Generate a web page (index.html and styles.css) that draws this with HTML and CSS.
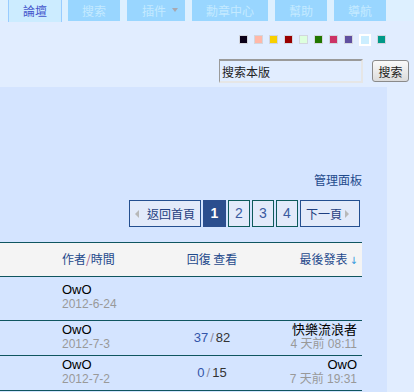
FILE: index.html
```html
<!DOCTYPE html>
<html lang="zh-Hant">
<head>
<meta charset="UTF-8">
<title>論壇</title>
<link rel="stylesheet" href="styles.css">
</head>

<body>

<div class="nav">
  <a class="tab current" href="#">論壇</a>
  <a class="tab" href="#">搜索</a>
  <a class="tab menu" href="#">插件<span class="caret"></span></a>
  <a class="tab wide" href="#">勳章中心</a>
  <a class="tab" href="#">幫助</a>
  <a class="tab" href="#">導航</a>
</div>

<div class="wrap">
  <ul class="styles">
    <li style="background-color: #0a0018"></li>
    <li style="background-color: #ffb8a8"></li>
    <li style="background-color: #f8d000"></li>
    <li style="background-color: #990000"></li>
    <li style="background-color: #ddffdd"></li>
    <li style="background-color: #227700"></li>
    <li style="background-color: #cc3366"></li>
    <li style="background-color: #6050a0"></li>
    <li class="current" style="background-color: #cceeff"></li>
    <li style="background-color: #009988"></li>
  </ul>
</div>

<form class="search">
  <input type="text" class="txt" value="搜索本版">
  <button type="button" class="btn">搜索</button>
</form>

<div class="panel">
  <div class="admin"><a href="#">管理面板</a></div>

  <div class="pages">
    <a class="prev" href="#">返回首頁</a>
    <strong>1</strong>
    <a class="num" href="#">2</a>
    <a class="num" href="#">3</a>
    <a class="num" href="#">4</a>
    <a class="next" href="#">下一頁</a>
  </div>

  <table class="threads">
    <tr class="head">
      <td class="icon"></td>
      <td class="by">作者<span class="sep">/</span>時間</td>
      <td class="nums">回復 查看</td>
      <td class="last">最後發表<span class="arrow">&#8595;</span></td>
    </tr>
    <tr class="first">
      <td class="icon"></td>
      <td class="by"><cite>OwO</cite><em>2012-6-24</em></td>
      <td class="nums"></td>
      <td class="last"></td>
    </tr>
    <tr>
      <td class="icon"></td>
      <td class="by"><cite>OwO</cite><em>2012-7-3</em></td>
      <td class="nums"><a href="#">37</a><span class="sep">/</span><b>82</b></td>
      <td class="last"><cite>快樂流浪者</cite><em>4 天前 08:11</em></td>
    </tr>
    <tr>
      <td class="icon"></td>
      <td class="by"><cite>OwO</cite><em>2012-7-2</em></td>
      <td class="nums"><a href="#">0</a><span class="sep">/</span><b>15</b></td>
      <td class="last"><cite>OwO</cite><em>7 天前 19:31</em></td>
    </tr>
  </table>
</div>

</body>
</html>
```

FILE: styles.css
```css
body {
  margin: 0;
  background-color: #e1edff;
  font-family: "Liberation Sans", "Noto Sans CJK TC", sans-serif;
  font-size: 12px;
  color: #000;
}
a {
  text-decoration: none;
}

/* top tabs */
.nav {
  display: flex;
  height: 21px;
  padding-left: 8px;
  background-color: #ddf0ff;
}
.tab {
  display: block;
  box-sizing: border-box;
  width: 52px;
  height: 21px;
  margin-right: 7px;
  line-height: 21px;
  text-align: center;
  font-family: "Noto Sans CJK TC", sans-serif;
  font-size: 12px;
  color: #c4eaff;
  background-color: #99d6ff;
}
.tab.current {
  width: 54px;
  height: 22px;
  margin-right: 6px;
  color: #4455cc;
  background-color: #ccecff;
  border-left: 1px solid #99ccff;
  border-right: 1px solid #99ccff;
}
.tab.menu {
  width: 58px;
  position: relative;
  text-align: left;
  padding-left: 15px;
}
.caret {
  position: absolute;
  left: 45px;
  top: 8px;
  width: 0;
  height: 0;
  border-left: 3px solid transparent;
  border-right: 3px solid transparent;
  border-top: 4px solid #a8a8b0;
}
.tab.wide {
  width: 76px;
}

/* style swatches */
.wrap {
  width: 387px;
}
.styles {
  display: flex;
  justify-content: flex-end;
  align-items: center;
  gap: 6px;
  height: 11px;
  margin: 13px 0 0;
  padding: 0 1px 0 0;
  list-style: none;
}
.styles li {
  box-sizing: border-box;
  width: 9px;
  height: 9px;
  border: 1px solid #d2d6de;
}
.styles li.current {
  width: 12px;
  height: 12px;
  border: 2px solid #fff;
}

/* search */
.search {
  display: flex;
  justify-content: flex-end;
  align-items: center;
  gap: 9px;
  margin: 14px 0 0;
  padding-right: 5px;
}
.txt {
  box-sizing: border-box;
  width: 144px;
  height: 24px;
  margin: 0;
  padding: 0 2px;
  border-top: 2px solid #9a9a9a;
  border-left: 1px solid #9a9a9a;
  border-right: 2px solid #e6e6e6;
  border-bottom: 2px solid #e6e6e6;
  background: transparent;
  font-family: "Noto Sans CJK TC", sans-serif;
  font-size: 12px;
  color: #222;
}
.btn {
  box-sizing: border-box;
  width: 37px;
  height: 22px;
  margin: 0;
  padding: 0;
  border: 1px solid #8a8a8a;
  border-radius: 3px;
  background: linear-gradient(#fafafa, #dcdcdc);
  font-family: "Noto Sans CJK TC", sans-serif;
  font-size: 12px;
  color: #222;
}

/* main panel */
.panel {
  width: 387px;
  margin-top: 4px;
  padding: 85px 0 0;
  min-height: 300px;
  background-color: #d4e4ff;
}
.admin {
  width: 362px;
  text-align: right;
  line-height: 16px;
  font-family: "Noto Sans CJK TC", sans-serif;
}
.admin a {
  color: #1f4a8c;
}

/* pager */
.pages {
  display: flex;
  justify-content: flex-end;
  gap: 2px;
  width: 360px;
  margin-top: 12px;
}
.pages a,
.pages strong {
  display: block;
  box-sizing: border-box;
  height: 27px;
  line-height: 25px;
  text-align: center;
  border: 1px solid #244f8f;
  background-color: #e2eafa;
  color: #1f3f80;
  font-size: 14px;
}
.pages .prev,
.pages .next {
  font-family: "Noto Sans CJK TC", sans-serif;
  font-size: 12px;
  position: relative;
}
.pages .prev {
  width: 72px;
  padding-left: 12px;
}
.pages .prev::before {
  content: "";
  position: absolute;
  left: 5px;
  top: 9px;
  border-top: 4px solid transparent;
  border-bottom: 4px solid transparent;
  border-right: 4px solid #b8b8b8;
}
.pages .next {
  width: 60px;
  padding-right: 12px;
}
.pages .next::after {
  content: "";
  position: absolute;
  right: 10px;
  top: 9px;
  border-top: 4px solid transparent;
  border-bottom: 4px solid transparent;
  border-left: 4px solid #b8b8b8;
}
.pages strong {
  width: 23px;
  background-color: #2b4e8e;
  border-color: #2b4e8e;
  color: #fff;
}
.pages .num {
  width: 22px;
  border-color: #0d5a5a;
  color: #3a5aa0;
}

/* topic list */
.threads {
  width: 362px;
  margin-top: 15px;
  border-collapse: collapse;
  table-layout: fixed;
}
.threads tr {
  border-bottom: 1px solid #0f5560;
}
.threads td {
  padding: 2px 0 4px;
  vertical-align: middle;
}
.threads .head {
  border-top: 1px solid #0f5560;
  background-color: #f4f4f4;
}
.threads .head td {
  height: 27px;
  font-family: "Noto Sans CJK TC", sans-serif;
  color: #1f4a8c;
}
.threads tr.first td {
  padding: 6px 0 9px;
}
td.icon {
  width: 62px;
}
td.by {
  width: 108px;
}
td.nums {
  width: 84px;
  text-align: center;
  font-size: 13px;
}
td.last {
  text-align: right;
  padding-right: 5px;
}
.threads .head td.nums {
  padding-left: 0;
  font-size: 12px;
}
.threads .head td.last {
  padding-right: 4px;
}
.threads cite,
.threads em {
  display: block;
  font-style: normal;
  line-height: 14px;
}
.threads cite {
  font-size: 13px;
  color: #000;
}
.threads em {
  font-size: 12px;
  color: #999;
}
.threads .sep {
  color: #8a8aa0;
  margin: 0 2px;
}
.threads .head .sep {
  margin: 0;
  color: #9a5a8a;
}
.threads .nums a {
  color: #3355aa;
}
.threads .nums b {
  font-weight: normal;
  color: #333;
}
.arrow {
  margin-left: 2px;
  color: #3399dd;
  font-family: "DejaVu Sans", sans-serif;
  font-size: 10px;
}
```
